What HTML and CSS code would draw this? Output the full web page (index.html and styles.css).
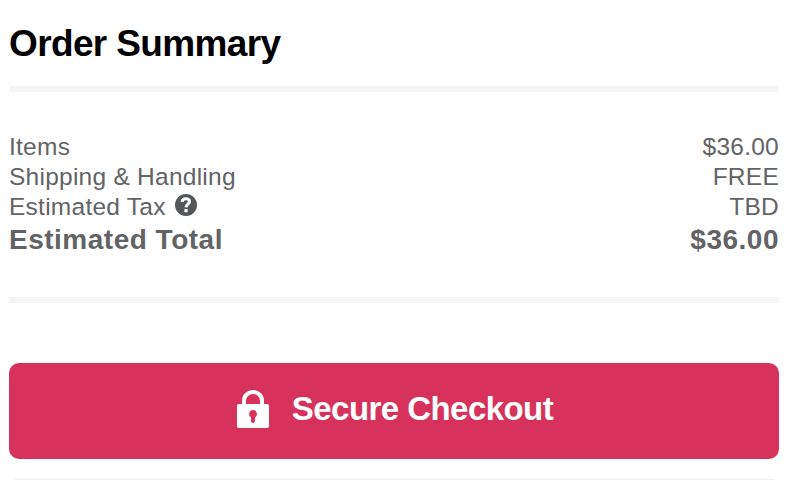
FILE: index.html
```html
<!DOCTYPE html>
<html lang="en">
<head>
<meta charset="utf-8">
<title>Order Summary</title>
<link rel="stylesheet" href="styles.css">
</head>
<body>
<main class="summary">
<h1 class="title"><span>Order Summary</span></h1>
<dl class="costs">
<div class="row"><dt>Items</dt><dd>$36.00</dd></div>
<div class="row"><dt>Shipping &amp; Handling</dt><dd>FREE</dd></div>
<div class="row tax"><dt>Estimated Tax</dt><svg class="help" viewBox="0 0 22 22" aria-hidden="true"><circle cx="11" cy="11" r="11"/><path d="M7 7.8C7.4 3.5 14.5 3.8 14.5 7.6C14.5 10.2 11.2 10 11 13.3"/><rect x="9.4" y="15" width="3.2" height="3.2" rx=".5"/></svg><dd>TBD</dd></div>
<div class="row total"><dt>Estimated Total</dt><dd>$36.00</dd></div>
</dl>
<button class="checkout"><svg class="lock" viewBox="0 0 32 38" aria-hidden="true"><path class="shackle" d="M7 16V10.5a9 8.5 0 0 1 18 0V16"/><rect y="14" width="32" height="24" rx="2"/><path class="keyhole" d="M16 20a4 4 0 0 0-2 7.4V31a2 2 0 0 0 4 0v-3.6a4 4 0 0 0-2-7.4z"/></svg><span>Secure Checkout</span></button>
<hr class="divider">
</main>
</body>
</html>
```
FILE: styles.css
```css
* { box-sizing: border-box; }
body { margin: 0; background: #fff; font-family: "Liberation Sans", Arial, sans-serif; color: #626365; }
.summary { width: 806px; height: 480px; overflow: hidden; padding: 0 27px 0 9px; }
.title { margin: 0; height: 92px; padding-top: 23px; border-bottom: 6px solid #f5f5f5; color: #000; font: bold 37px/42px "Liberation Sans", Arial, sans-serif; letter-spacing: -.63px; }
.costs { margin: 0; height: 211px; padding-top: 40px; border-bottom: 6px solid #f5f5f5; font-size: 24.5px; line-height: 30px; letter-spacing: .25px; }
.row { display: flex; justify-content: space-between; height: 30px; }
dd { margin: 0; }
.tax dd { margin-left: auto; }
.help { width: 22px; height: 22px; margin: 2px 0 0 9px; fill: #555658; }
.tax { justify-content: flex-start; }
.help path { fill: none; stroke: #fff; stroke-width: 3; }
.help rect { fill: #fff; }
.total { height: 36px; font-size: 28px; line-height: 36px; font-weight: bold; letter-spacing: .5px; }
.checkout { width: 100%; height: 96px; margin: 60px 0 0; border: 0; border-radius: 10px; background: #d6325b; color: #fff; display: flex; align-items: center; justify-content: center; gap: 23px; padding: 0 0 4px 2px; font: bold 33px/40px "Liberation Sans", Arial, sans-serif; letter-spacing: -.55px; }
.lock { width: 32px; height: 38px; fill: #fff; }
.shackle { fill: none; stroke: #fff; stroke-width: 4; }
.keyhole { fill: #d6325b; }
.divider { margin: 20px 5px 0; border: 0; height: 1px; background: #eee; }
```
